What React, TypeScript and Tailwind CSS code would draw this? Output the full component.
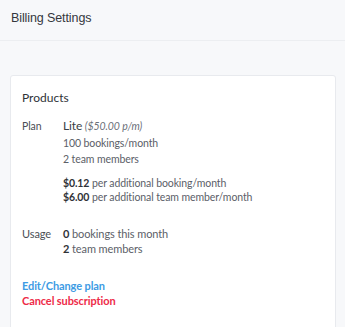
export default function App() {
  return (
    <div className="min-h-[327px] bg-[#f7f8fa] text-[#5b6068] font-['Lato','Open_Sans',sans-serif]">
      {/* Header */}
      <div className="h-[41px] border-b border-[#eceef1] px-[11px] flex items-center">
        <h1 className="text-[12.5px] text-[#34373d] -mt-[4px] tracking-[-0.1px] font-['Liberation_Sans',Arial,sans-serif]">Billing Settings</h1>
      </div>

      <div className="ml-[10px] mr-[9px] pt-[34px]">
        <div className="bg-white border border-[#e8eaee] rounded-[3px] px-[11px] pt-[13px] pb-[30px]">
          <h2 className="text-[12px] text-[#2f3237] leading-[18px]">Products</h2>

          <div className="mt-[10px] flex text-[10.5px] tracking-[-0.1px]">
            <div className="w-[41px] shrink-0 leading-[18px] text-[#4a4e55]">Plan</div>
            <div>
              <div className="leading-[18px]">
                <span className="text-[12px] text-[#3a3e45]">Lite</span>{' '}
                <span className="italic text-[10.5px] text-[#6b7079]">($50.00 p/m)</span>
              </div>
              <div className="leading-[16px]">100 bookings/month</div>
              <div className="leading-[16px]">2 team members</div>
              <div className="mt-[9px] leading-[14px]">
                <span className="font-bold text-[#2f3237]">$0.12</span> per additional booking/month
              </div>
              <div className="leading-[14px]">
                <span className="font-bold text-[#2f3237]">$6.00</span> per additional team member/month
              </div>
            </div>
          </div>

          <div className="mt-[22px] flex text-[11px] tracking-[-0.1px]">
            <div className="w-[41px] shrink-0 leading-[15px] text-[#4a4e55]">Usage</div>
            <div>
              <div className="leading-[15px]">
                <span className="font-bold text-[#2f3237]">0</span> bookings this month
              </div>
              <div className="leading-[15px]">
                <span className="font-bold text-[#2f3237]">2</span> team members
              </div>
            </div>
          </div>

          <div className="mt-[22px] text-[11px] font-bold leading-[15px] tracking-[-0.1px]">
            <div className="text-[#3d9be4]">Edit/Change plan</div>
            <div className="text-[#ee2b48]">Cancel subscription</div>
          </div>
        </div>
      </div>
    </div>
  )
}
